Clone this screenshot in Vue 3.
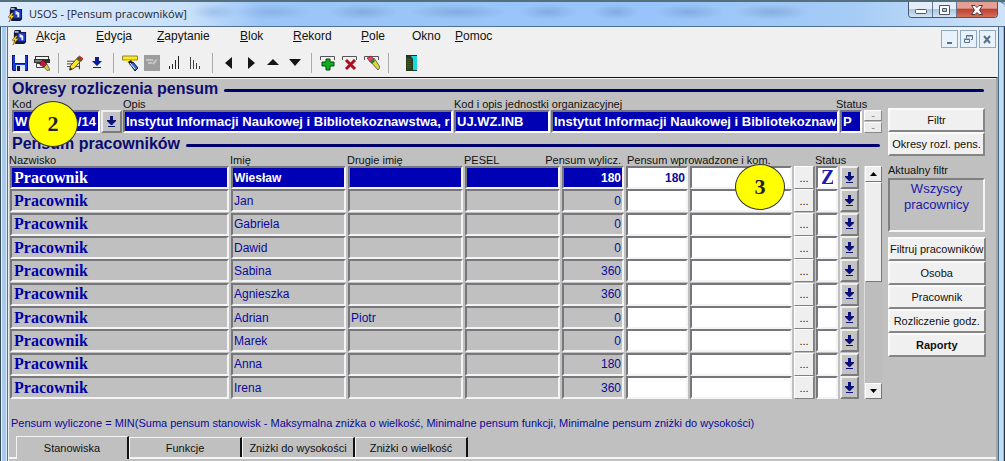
<script setup>
import { ref } from 'vue'

const menu = ref([
  { key: 'A', rest: 'kcja' },
  { key: 'E', rest: 'dycja' },
  { key: 'Z', rest: 'apytanie' },
  { key: 'B', rest: 'lok' },
  { key: 'R', rest: 'ekord' },
  { key: 'P', rest: 'ole' },
  { key: '', rest: 'Okno' },
  { key: 'P', rest: 'omoc' }
])

const period = ref({
  code: 'W' + ' '.repeat(14) + '/14',
  name: 'Instytut Informacji Naukowej i Bibliotekoznawstwa, rok 2013/14',
  unit: 'UJ.WZ.INB',
  unitName: 'Instytut Informacji Naukowej i Bibliotekoznawstwa',
  status: 'P'
})

const rows = ref([
  { first: 'Wiesław', second: '', calc: '180', own: '180', status: 'Z' },
  { first: 'Jan', second: '', calc: '0', own: '', status: '' },
  { first: 'Gabriela', second: '', calc: '0', own: '', status: '' },
  { first: 'Dawid', second: '', calc: '0', own: '', status: '' },
  { first: 'Sabina', second: '', calc: '360', own: '', status: '' },
  { first: 'Agnieszka', second: '', calc: '360', own: '', status: '' },
  { first: 'Adrian', second: 'Piotr', calc: '0', own: '', status: '' },
  { first: 'Marek', second: '', calc: '0', own: '', status: '' },
  { first: 'Anna', second: '', calc: '180', own: '', status: '' },
  { first: 'Irena', second: '', calc: '360', own: '', status: '' }
])

const actions = ['Filtruj pracowników', 'Osoba', 'Pracownik', 'Rozliczenie godz.', 'Raporty']
const tabs = ['Stanowiska', 'Funkcje', 'Zniżki do wysokości', 'Zniżki o wielkość']
const active = ref(0)
</script>

<template>
  <div class="window">
    <header class="titlebar">
      <svg class="app-icon" viewBox="0 0 16 16" aria-hidden="true">
        <path d="M3 0h6l1 2h5v11l-2 2H4l-2-2V3z" fill="#101840" />
        <path d="M6 3h8v9H6z" fill="#2038c8" />
        <path d="M8 4l4 2v5h-2V8H8z" fill="#e8f0ff" />
        <path d="M3 1h4v2H3z" fill="#a8b8c8" />
        <path d="M4 6L0 11h3l-2 5 6-7H4l2-3z" fill="#ffd21a" stroke="#4a3800" stroke-width=".5" />
      </svg>
      <h1>USOS - [Pensum pracowników]</h1>
      <div class="win-buttons">
        <button type="button" aria-label="Minimalizuj">
          <svg width="14" height="12" viewBox="0 0 14 12"><rect x="1.500" y="5.500" width="11" height="4" rx="1" fill="#fff" stroke="#4a5668" /></svg>
        </button>
        <button type="button" aria-label="Maksymalizuj">
          <svg width="14" height="12" viewBox="0 0 14 12"><path d="M1.500 1.500h10v9h-10zM4.500 4.500h4v3h-4z" fill="#fff" fill-rule="evenodd" stroke="#4a5668" /></svg>
        </button>
        <button type="button" class="close" aria-label="Zamknij">
          <svg width="14" height="12" viewBox="0 0 14 12"><path d="M1.500 1.500h3.500l2 2 2-2h3.500L9.500 6l3 4.500H9l-2-2-2 2H1.500l3-4.500z" fill="#fff" stroke="#5a3438" /></svg>
        </button>
      </div>
    </header>

    <div class="client">
      <nav class="menubar" aria-label="Menu">
        <svg class="app-icon" viewBox="0 0 16 16" aria-hidden="true">
          <path d="M3 0h6l1 2h5v11l-2 2H4l-2-2V3z" fill="#101840" />
          <path d="M6 3h8v9H6z" fill="#2038c8" />
          <path d="M8 4l4 2v5h-2V8H8z" fill="#e8f0ff" />
          <path d="M3 1h4v2H3z" fill="#a8b8c8" />
          <path d="M4 6L0 11h3l-2 5 6-7H4l2-3z" fill="#ffd21a" stroke="#4a3800" stroke-width=".5" />
        </svg>
        <div class="menu-items">
          <button v-for="m in menu" :key="m.key + m.rest" type="button"><u>{{ m.key }}</u>{{ m.rest }}</button>
        </div>
        <div class="mdi-buttons">
          <button type="button" aria-label="Minimalizuj okno"><svg width="11" height="11"><path d="M3 8h5v2H3z" fill="#5c7085" /></svg></button>
          <button type="button" aria-label="Przywróć okno"><svg width="11" height="11" fill="none" stroke="#5c7085"><path d="M3.500 4V1.500h6v4H8M3 2h7M1.500 5.500h5v3h-5zM1 5h6" /></svg></button>
          <button type="button" aria-label="Zamknij okno"><svg width="11" height="11" fill="none" stroke="#5c7085" stroke-width="2"><path d="M2 2l6 7M8 2L2 9" /></svg></button>
        </div>
      </nav>

      <div class="toolbar" role="toolbar" aria-label="Narzędzia">
        <button type="button" aria-label="Zapisz"><svg viewBox="0 0 16 16"><path d="M0 0h16v16H1l-1-1z" fill="#0a1478" /><path d="M1 1h2v8h10V1h2v14H1z" fill="#1838e0" /><path d="M3 0h10v8H3z" fill="#f4f6fa" /><path d="M4 10h9v6H4z" fill="#dfe5ee" /><path d="M5 11h3v5H5z" fill="#101848" /></svg></button>
        <button type="button" aria-label="Drukuj formularz"><svg viewBox="0 0 16 16"><path d="M1 1h14v3H1zM0 4h16v4H0z" fill="#333" /><path d="M2 2h12v2H2z" fill="#f6f6f6" /><path d="M1 5h7v2H1z" fill="#777" /><path d="M2.500 8.500h7v4h-7z" fill="#fff" stroke="#444" /><path d="M6 8l3-3 4 4-3 3-4-2z" fill="#c4183c" stroke="#500" stroke-width=".6" /><path d="M10 12l3-3 3 6-3 .5z" fill="#d8c840" stroke="#332" stroke-width=".6" /></svg></button>
        <span class="sep"></span>
        <button type="button" aria-label="Edytuj"><svg viewBox="0 0 18 16"><path d="M0 6h9M0 9h7M0 12h14v3M14 7v7" fill="none" stroke="#333" /><path d="M4 11L12 2l4 3-8 9-5 2z" fill="#ffe22a" stroke="#4a3a00" /><path d="M12 2l2-2 4 3-2 3z" fill="#e02020" stroke="#611" stroke-width=".6" /><path d="M11 3l4 3" stroke="#258030" stroke-width="2" /><path d="M3 16l1-3 2 2z" fill="#111" /></svg></button>
        <button type="button" aria-label="Lista wartości"><svg viewBox="0 0 16 16"><path d="M6 2h4v4h3l-5 5-5-5h3zM4 12h8v1H4z" fill="#0c1c94" /></svg></button>
        <span class="sep"></span>
        <button type="button" aria-label="Zapytanie"><svg viewBox="0 0 16 16"><path d="M.5 1h15v4H.5z" fill="#ffe81c" stroke="#8a8430" /><path d="M3 5h9L8 9z" fill="#ffd900" /><path d="M6 7l3-2 2 3-3 2z" fill="#124" /><path d="M8 9l3-2 5 6-3 3z" fill="#3268d8" stroke="#0a1840" /><path d="M8 8l5 6" stroke="#fff" /></svg></button>
        <button type="button" class="off" disabled aria-label="Wykonaj zapytanie"><svg viewBox="0 0 16 16"><path d="M0 0h16v16H0z" fill="#9d9d9d" /><path d="M2 4h7v2H2zM4 7h4v2H4zM11 5l3-1-4 6-2-2z" fill="#c4c4c4" /></svg></button>
        <button type="button" aria-label="Sortuj rosnąco"><svg viewBox="0 0 16 16"><path d="M3.500 14v-3M6.500 14v-5M9.500 14V5M12.500 14V1" fill="none" stroke="#222" /></svg></button>
        <button type="button" aria-label="Sortuj malejąco"><svg viewBox="0 0 16 16"><path d="M2.500 14V2M5.500 14V5M8.500 14V8M11.500 14v-3" fill="none" stroke="#444" /></svg></button>
        <span class="sep"></span>
        <button type="button" aria-label="Poprzedni blok"><svg viewBox="0 0 16 16"><path d="M11 2v12L4 8z" fill="#151515" /></svg></button>
        <button type="button" aria-label="Następny blok"><svg viewBox="0 0 16 16"><path d="M5 2v12l7-6z" fill="#151515" /></svg></button>
        <button type="button" aria-label="Poprzedni rekord"><svg viewBox="0 0 16 16"><path d="M2 10h12L8 4z" fill="#151515" /></svg></button>
        <button type="button" aria-label="Następny rekord"><svg viewBox="0 0 16 16"><path d="M2 4h12l-6 7z" fill="#151515" /></svg></button>
        <span class="sep"></span>
        <button type="button" aria-label="Dodaj rekord"><svg viewBox="0 0 16 16"><path d="M.5 5V1.500h14V5" fill="none" stroke="#555" /><path d="M6 4h4v3h4v4h-4v4H6v-4H2V7h4z" fill="#12b020" stroke="#064c10" /></svg></button>
        <button type="button" aria-label="Usuń rekord"><svg viewBox="0 0 16 16"><path d="M.5 5V1.500h14V5" fill="none" stroke="#555" /><path d="M4 5l9 9M13 5l-9 9" stroke="#b00c1c" stroke-width="3" /></svg></button>
        <button type="button" aria-label="Wyczyść rekord"><svg viewBox="0 0 16 16"><path d="M.5 5V1.500h14V5" fill="none" stroke="#555" /><path d="M6 6l4-3 6 9-2 3z" fill="#ded83a" stroke="#333" stroke-width=".7" /><path d="M3 3l4-2 3 3-4 3z" fill="#e0406c" stroke="#722" stroke-width=".6" /><path d="M6 7l4-3 1 2-3 3z" fill="#287838" /></svg></button>
        <span class="sep"></span>
        <button type="button" class="door" aria-label="Wyjście"><svg viewBox="0 0 16 16"><path d="M3 0h11v16H3z" fill="#103048" /><path d="M8 1h6v14H8z" fill="#18d8e8" /><path d="M3 2l5-1 2 3v11l-1 1H3z" fill="#2c4018" /><path d="M5 4v10M7 4v10" stroke="#6a6a28" stroke-dasharray="1 1" /></svg></button>
      </div>

      <main class="body">
        <h2>Okresy rozliczenia pensum</h2>
        <div class="columns">
          <div class="left">
            <div class="period">
              <div class="field code">
                <label for="code">Kod</label>
                <input id="code" v-model="period.code">
                <span class="badge two">2</span>
              </div>
              <button type="button" class="pick" aria-label="Wybierz okres"><svg width="9" height="12"><path d="M3 0h3v4h3v1L5 9H4L0 5V4h3zM1 10h7v1H1z" fill="#0b1178" /></svg></button>
              <div class="field name"><label for="name">Opis</label><input id="name" v-model="period.name"></div>
              <div class="field unit"><label for="unit">Kod i opis jednostki organizacyjnej</label><input id="unit" v-model="period.unit"></div>
              <div class="field unit-name"><input v-model="period.unitName" aria-label="Opis jednostki organizacyjnej"></div>
              <div class="field state"><label for="state">Status</label><input id="state" v-model="period.status"></div>
              <div class="spin"><button type="button" aria-label="Poprzedni okres">-</button><button type="button" aria-label="Następny okres">-</button></div>
            </div>

            <h2 class="second">Pensum pracowników</h2>
            <div class="staff">
              <table>
                <colgroup>
                  <col><col class="c-first"><col class="c-first"><col class="c-pesel"><col class="c-num"><col class="c-num"><col class="c-note"><col class="c-dots"><col class="c-state"><col class="c-pick">
                </colgroup>
                <thead>
                  <tr>
                    <th>Nazwisko</th><th>Imię</th><th>Drugie imię</th><th>PESEL</th>
                    <th><div class="end">Pensum wylicz.</div></th><th colspan="3" class="entered">Pensum wprowadzone i kom.</th><th colspan="2">Status</th>
                  </tr>
                </thead>
                <tbody>
                  <tr v-for="(r, i) in rows" :key="i" :class="{ current: i === 0 }">
                    <td><input class="surname" value="Pracownik" aria-label="Nazwisko"></td>
                    <td><input v-model="r.first" aria-label="Imię"></td>
                    <td><input v-model="r.second" aria-label="Drugie imię"></td>
                    <td><input aria-label="PESEL"></td>
                    <td><input v-model="r.calc" class="num" aria-label="Pensum wyliczone"></td>
                    <td><input v-model="r.own" class="num white" aria-label="Pensum wprowadzone"></td>
                    <td class="note"><input class="white" aria-label="Komentarz"><span v-if="i === 0" class="badge three">3</span></td>
                    <td><button type="button" class="dots" aria-label="Edytuj komentarz">...</button></td>
                    <td><input v-model="r.status" class="white status" aria-label="Status"></td>
                    <td><button type="button" class="pick" aria-label="Wybierz status"><svg width="9" height="12"><path d="M3 0h3v4h3v1L5 9H4L0 5V4h3zM1 10h7v1H1z" fill="#0b1178" /></svg></button></td>
                  </tr>
                </tbody>
              </table>
              <div class="scroll">
                <button type="button" aria-label="W górę"><svg width="7" height="4"><path d="M0 4h7L3.500 0z" /></svg></button>
                <div class="thumb"></div>
                <button type="button" class="down" aria-label="W dół"><svg width="7" height="4"><path d="M0 0h7L3.500 4z" /></svg></button>
              </div>
            </div>
          </div>

          <aside class="side">
            <button type="button">Filtr</button>
            <button type="button">Okresy rozl. pens.</button>
            <span class="caption">Aktualny filtr</span>
            <output>Wszyscy pracownicy</output>
            <div class="actions">
              <button v-for="a in actions" :key="a" type="button">{{ a }}</button>
            </div>
          </aside>
        </div>

        <p class="formula">Pensum wyliczone = MIN(Suma pensum stanowisk - Maksymalna zniżka o wielkość, Minimalne pensum funkcji, Minimalne pensum zniżki do wysokości)</p>
        <div class="tabs" role="tablist">
          <button v-for="(t, i) in tabs" :key="t" type="button" role="tab" :aria-selected="active === i" :class="{ on: active === i }" @click="active = i">{{ t }}</button>
        </div>
      </main>
    </div>
  </div>
</template>

<style>
body {
  margin: 0;
}
</style>

<style scoped>
* {
  box-sizing: border-box;
}
.window {
  min-height: 100vh;
  display: flex;
  flex-direction: column;
  padding: 0 7px 0 8px;
  overflow: hidden;
  font-family: "Liberation Sans", Arial, sans-serif;
  font-size: 11px;
  color: #111;
  background:
    linear-gradient(#55707c, #55707c) 0 0 / 100% 2px no-repeat,
    linear-gradient(90deg, #34495c 0 1px, #e4f3ff 1px 2px, #a9c9ea 2px 6px, #dcecfa 6px 7px, #54708c 7px 8px, transparent 8px calc(100% - 7px), #4b6c8a calc(100% - 7px) calc(100% - 6px), #c3dcf5 calc(100% - 6px) calc(100% - 2px), #4fe0f0 calc(100% - 2px) calc(100% - 1px), #1a3550 calc(100% - 1px)) 0 27px no-repeat,
    #a9cdf4;
}
button {
  font: inherit;
  color: inherit;
  padding: 0;
  margin: 0;
  border: 0;
  background: none;
  white-space: nowrap;
}
input {
  font: inherit;
  min-width: 0;
  outline: 0;
  border-radius: 0;
}
svg {
  display: block;
}
.titlebar {
  height: 27px;
  margin: 0 -7px 0 -8px;
  padding: 0 7px 0 8px;
  display: flex;
  align-items: center;
  gap: 6px;
  border-top: 2px solid #55707c;
  border-bottom: 1px solid #52708f;
  border-radius: 0 7px 0 0;
  background:
    radial-gradient(ellipse at center, #6d97cc55, transparent 70%) 190px 2px / 50px 16px no-repeat,
    radial-gradient(ellipse at center, #6d97cc66, transparent 70%) 232px 2px / 80px 16px no-repeat,
    radial-gradient(ellipse at center, #6d97cc88, transparent 70%) 328px 2px / 70px 16px no-repeat,
    radial-gradient(ellipse at center, #6d97cc88, transparent 70%) 408px 2px / 100px 16px no-repeat,
    radial-gradient(ellipse at center, #6d97cc88, transparent 70%) 518px 2px / 60px 16px no-repeat,
    radial-gradient(ellipse at center, #6d97cc88, transparent 70%) 592px 2px / 48px 16px no-repeat,
    radial-gradient(ellipse at center, #6d97cc88, transparent 70%) 654px 2px / 70px 16px no-repeat,
    radial-gradient(ellipse at center, #6d97cc88, transparent 70%) 734px 2px / 76px 16px no-repeat,
    linear-gradient(90deg, #dcecfc 0, #c8e0fa 190px, #9cc6f8 260px, #98c4fb 65%, #a6ccf5 85%, #cfe3f8 100%);
}
.app-icon {
  width: 15px;
  height: 15px;
  flex: none;
}
h1 {
  margin: 0;
  font: 11px/16px "Open Sans", "Noto Sans", sans-serif;
  color: #1c2530;
}
.win-buttons {
  align-self: flex-start;
  margin-left: auto;
  display: flex;
  border: 1px solid #455a70;
  border-top: 0;
  border-radius: 0 0 4px 4px;
  overflow: hidden;
}
.win-buttons button {
  width: 24px;
  height: 15px;
  display: grid;
  place-items: center;
  border-right: 1px solid #5f7892;
  background: linear-gradient(#e3eefa 45%, #adc5df 50%, #d3e4f5);
}
.win-buttons .close {
  width: 40px;
  border-right: 0;
  background: linear-gradient(#e3a093 40%, #bf4133 50%, #d2705a);
}
.client {
  flex: 1;
  display: flex;
  flex-direction: column;
  background: #f0f0f0;
}
.menubar {
  height: 21px;
  display: flex;
  align-items: center;
  gap: 9px;
  padding-left: 4px;
  font-size: 12px;
}
.menu-items {
  flex: 1;
  display: grid;
  grid-template-columns: 60px 61px 83px 53px 68px 51px 43px auto;
  margin-top: -4px;
}
.menu-items button {
  text-align: left;
}
.mdi-buttons {
  display: flex;
  align-self: flex-end;
  gap: 2px;
  padding-right: 2px;
}
.mdi-buttons button {
  width: 17px;
  height: 18px;
  display: grid;
  place-items: center;
  border: 1px solid #8fa9c4;
  background: #e8f2fc;
}
.toolbar {
  height: 29px;
  padding: 0 1px;
  display: flex;
  align-items: center;
}
.toolbar button {
  width: 22px;
  height: 20px;
  display: grid;
  place-items: center;
}
.toolbar svg {
  width: 16px;
  height: 16px;
}
.toolbar .sep {
  width: 1px;
  height: 20px;
  margin: 0 5px;
  background: #aaa;
}
.toolbar .door {
  margin-left: 6px;
}
.body {
  flex: 1;
  border-top: 1px solid #111;
  border-right: 2px solid #a4a4a4;
  background: #c0c0c0;
  box-shadow: inset 0 1px #f4f4f4, inset 1px 0 #ededed;
  padding-top: 2px;
}
h2 {
  margin: 0 12px 0 4px;
  display: flex;
  align-items: center;
  gap: 6px;
  height: 18px;
  color: #0b0b72;
  font: bold 16px/18px "Liberation Sans", Arial, sans-serif;
}
h2::after {
  content: "";
  flex: 1;
  height: 3px;
  border-radius: 2px;
  margin-top: 3px;
  background: #00006c;
}
.columns {
  display: flex;
  gap: 6px;
  padding: 0 11px 0 1px;
}
.left {
  flex: 1;
  min-width: 0;
}
.period {
  display: flex;
  align-items: flex-end;
  margin-left: 3px;
  gap: 1px;
}
.field {
  position: relative;
}
.field label {
  display: block;
  height: 12px;
  line-height: 12px;
  white-space: nowrap;
}
.field input {
  display: block;
  width: 100%;
  height: 23px;
  padding: 0 1px;
  border: 2px solid;
  border-color: #75757f #fff #fff #75757f;
  background: #0000b4;
  color: #fff;
  font-weight: bold;
  font-size: 13px;
}
.code { width: 88px; }
.name { flex: 1; }
.unit { width: 96px; }
.unit-name { width: 288px; }
.state { width: 22px; }
.state label { margin-left: -4px; }
.pick {
  width: 21px;
  height: 23px;
  display: grid;
  place-items: center;
  border: 2px solid;
  border-color: #eee #7c7c7c #7c7c7c #eee;
  background: #c3c3c3;
}
.spin {
  width: 18px;
  display: grid;
  gap: 1px;
  margin-left: 1px;
}
.spin button {
  height: 11px;
  line-height: 7px;
  color: #888;
  background: #ececec;
  border: 1px solid;
  border-color: #fff #888 #888 #fff;
}
.second {
  height: 21px;
  margin: 0 2px 0 3px;
}
.staff {
  display: flex;
  gap: 4px;
}
table {
  flex: 1;
  width: 100%;
  min-width: 0;
  table-layout: fixed;
  border-collapse: collapse;
}
.c-first { width: 117px; }
.c-pesel { width: 97px; }
.c-num { width: 64px; }
.c-note { width: 104px; }
.c-dots { width: 22px; }
.c-state { width: 24px; }
.c-pick { width: 21px; }
th {
  height: 12px;
  padding: 0;
  line-height: 12px;
  font-weight: normal;
  text-align: left;
  white-space: nowrap;
}
.end {
  display: flex;
  justify-content: flex-end;
  padding-right: 4px;
}
th.entered { padding-left: 2px; }
td {
  height: 23px;
  padding: 0 1px;
}
tbody tr:nth-child(3n) td { height: 24px; }
td input {
  display: block;
  width: 100%;
  height: 23px;
  padding: 0 1px;
  border: 2px solid;
  border-color: #77777b #f4f4f4 #f4f4f4 #77777b;
  background: #c0c0c0;
  color: #0a0a9c;
  font-size: 12px;
}
td .num {
  text-align: right;
}
td .white {
  background: #fff;
}
td .surname {
  font: bold 16px/19px "Liberation Serif", "Times New Roman", serif;
  color: #0000a8;
  padding-left: 2px;
}
td .status {
  font: bold 20px/19px "Liberation Serif", "Times New Roman", serif;
  color: #1a1ab4;
  padding: 0 3px;
}
.current input:not(.white) {
  background: #0000b4;
  color: #fff;
  font-weight: bold;
}
.current .num {
  font-weight: bold;
}
td .dots,
td .pick {
  width: 100%;
  height: 23px;
}
td .dots {
  display: block;
  background: #efefef;
  border: 1px solid;
  border-color: #fff #808080 #808080 #fff;
  box-shadow: 1px 0 #888;
}
.note {
  position: relative;
}
.badge {
  position: absolute;
  z-index: 2;
  display: grid;
  place-items: center;
  width: 50px;
  height: 46px;
  border: 1px solid #333;
  border-radius: 50%;
  background: #ffff00;
  color: #222;
  font: bold 22px/22px "Liberation Serif", "Times New Roman", serif;
}
.two { left: 16px; top: 3px; }
.three { left: 46px; top: -2px; }
.scroll {
  width: 18px;
  margin-top: 12px;
  display: flex;
  flex-direction: column;
  background: #bdbdbd;
  border-left: 1px solid #ddd;
}
.scroll button,
.thumb {
  background: #eee;
  border: 1px solid;
  border-color: #fff #777 #777 #fff;
}
.scroll button {
  height: 16px;
  display: grid;
  place-items: center;
}
.thumb {
  height: 100px;
}
.scroll .down {
  margin-top: auto;
}
.side {
  width: 97px;
  padding-top: 10px;
  display: flex;
  flex-direction: column;
}
.side button {
  height: 24px;
  border: 2px solid;
  border-color: #fafafa #858585 #858585 #fafafa;
  background: #f0f0f0;
}
.caption {
  margin-top: 8px;
  height: 14px;
  line-height: 12px;
}
output {
  height: 54px;
  padding: 1px 12px;
  border: 2px solid;
  border-color: #808080 #f4f4f4 #f4f4f4 #808080;
  color: #1a1aa8;
  font-size: 13px;
  line-height: 16px;
  text-align: center;
}
.actions {
  display: grid;
  margin-top: 5px;
}
.actions button:last-child {
  font-weight: bold;
}
.formula {
  margin: 17px 0 6px 3px;
  line-height: 14px;
  color: #0a0a9c;
  white-space: nowrap;
}
.tabs {
  display: flex;
  align-items: flex-end;
  padding-left: 8px;
  border-bottom: 2px solid #f4f4f4;
}
.tabs button {
  width: 113px;
  height: 20px;
  border: solid;
  border-width: 1px 2px 0 1px;
  border-color: #f4f4f4 #111 #111 #f4f4f4;
}
.tabs .on {
  height: 23px;
  margin-bottom: -2px;
  background: #c0c0c0;
}
</style>
